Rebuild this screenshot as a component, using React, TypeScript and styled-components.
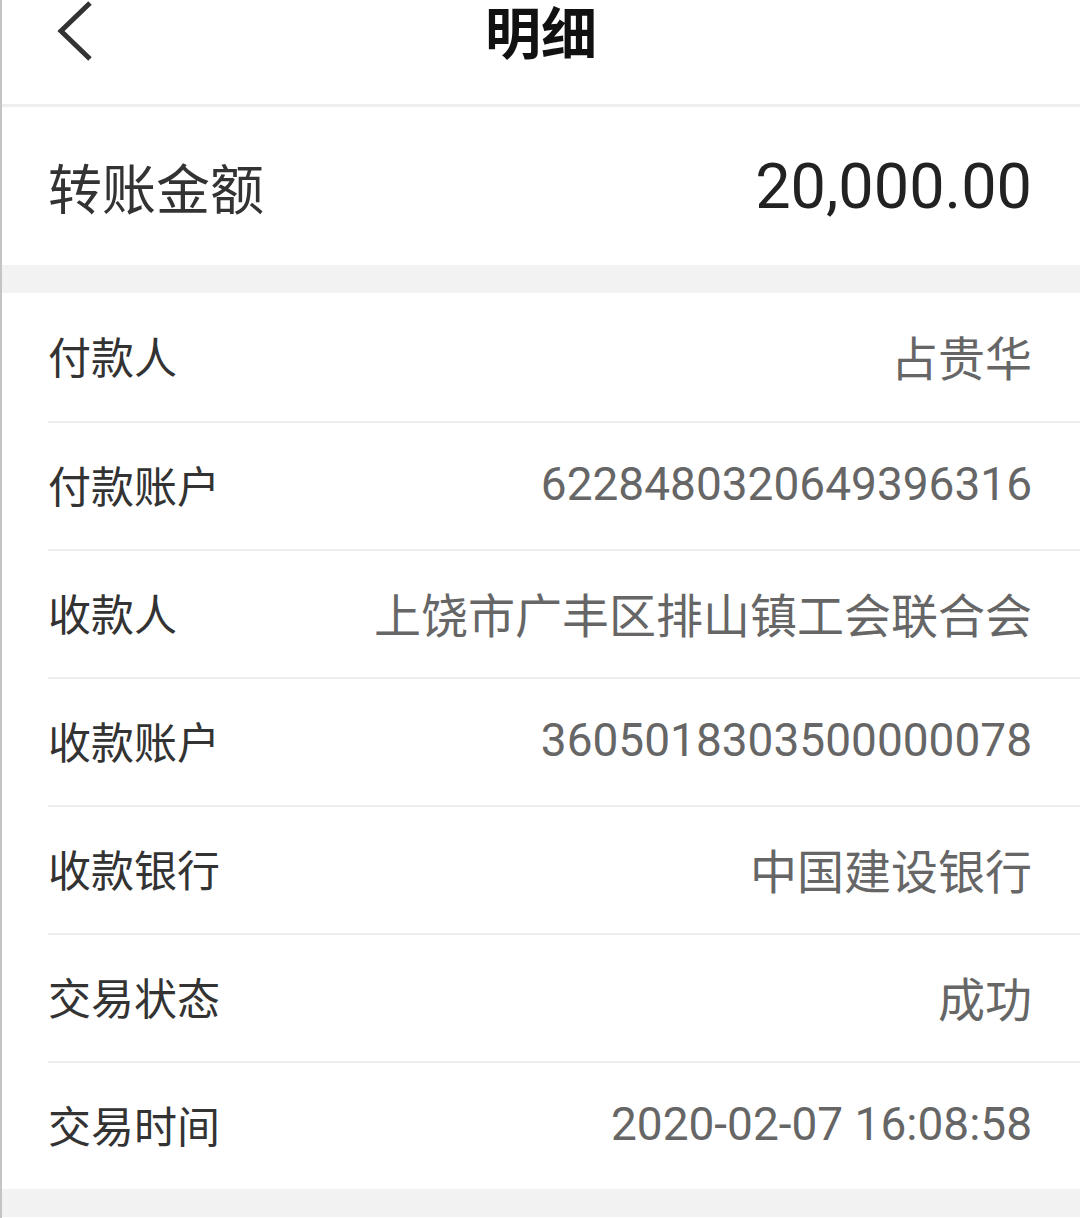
import React from 'react'
import styled, { createGlobalStyle } from 'styled-components'

const GlobalStyle = createGlobalStyle`
  html, body {
    margin: 0;
    padding: 0;
    background: #ffffff;
  }
  body {
    font-family: Roboto, "Noto Sans CJK SC", "Noto Sans", sans-serif;
  }
`

const rows = [
  { label: '付款人', value: '占贵华', cjk: true },
  { label: '付款账户', value: '6228480320649396316' },
  { label: '收款人', value: '上饶市广丰区排山镇工会联合会', cjk: true },
  { label: '收款账户', value: '3605018303500000078' },
  { label: '收款银行', value: '中国建设银行', cjk: true },
  { label: '交易状态', value: '成功', cjk: true },
  { label: '交易时间', value: '2020-02-07 16:08:58' },
]

function BackIcon() {
  return (
    <svg width="42" height="62" viewBox="0 0 42 62" fill="none">
      <path d="M37 3 L8 31 L37 59" stroke="#333" strokeWidth="5" strokeLinecap="butt" strokeLinejoin="miter" />
    </svg>
  )
}

export default function App() {
  return (
    <Page>
      <GlobalStyle />
      <Header>
        <BackButton>
          <BackIcon />
        </BackButton>
        <Title>明细</Title>
      </Header>
      <AmountRow>
        <AmountLabel>转账金额</AmountLabel>
        <Amount>20,000.00</Amount>
      </AmountRow>
      <Gap />
      <List>
        {rows.map((r) => (
          <Row key={r.label}>
            <Label>{r.label}</Label>
            <Value $cjk={!!r.cjk}>{r.value}</Value>
          </Row>
        ))}
      </List>
      <Gap />
    </Page>
  )
}

const Page = styled.div`
  width: 1080px;
  min-height: 1218px;
  box-sizing: border-box;
  border-left: 2px solid #c4c4c4;
  background: #ffffff;
  display: flex;
  flex-direction: column;
`
const Header = styled.div`
  position: relative;
  height: 104px;
  border-bottom: 3px solid #eeeeee;
  display: flex;
  justify-content: center;
  align-items: flex-start;
  padding-top: 2px;
  box-sizing: border-box;
  height: 107px;
`
const BackButton = styled.div`
  position: absolute;
  left: 51px;
  top: 0px;
`
const Title = styled.div`
  font-family: "Noto Sans CJK SC", sans-serif;
  font-size: 56px;
  font-weight: 700;
  color: #111;
  line-height: 56px;
`
const AmountRow = styled.div`
  height: 158px;
  display: flex;
  align-items: center;
  justify-content: space-between;
  padding: 0 48px 0 46px;
`
const AmountLabel = styled.div`
  font-family: "Noto Sans CJK SC", sans-serif;
  font-size: 54px;
  color: #333;
`
const Amount = styled.div`
  font-family: Roboto, sans-serif;
  font-size: 63px;
  color: #222;
`
const Gap = styled.div`
  height: 28px;
  background: #f2f2f2;
`
const List = styled.div`
  display: flex;
  flex-direction: column;
  padding-left: 46px;
`
const Row = styled.div`
  height: 128px;
  display: flex;
  align-items: center;
  justify-content: space-between;
  padding-right: 48px;
  box-sizing: border-box;
  & + & {
    border-top: 2px solid #eeeeee;
  }
`
const Label = styled.div`
  font-family: "Noto Sans CJK SC", sans-serif;
  font-size: 43px;
  color: #333;
  margin-top: -4px;
`
const Value = styled.div<{ $cjk: boolean }>`
  font-family: Roboto, "Noto Sans CJK SC", sans-serif;
  font-size: ${(p) => (p.$cjk ? '47px' : '46px')};
  color: #666;
  margin-top: -4px;
`
